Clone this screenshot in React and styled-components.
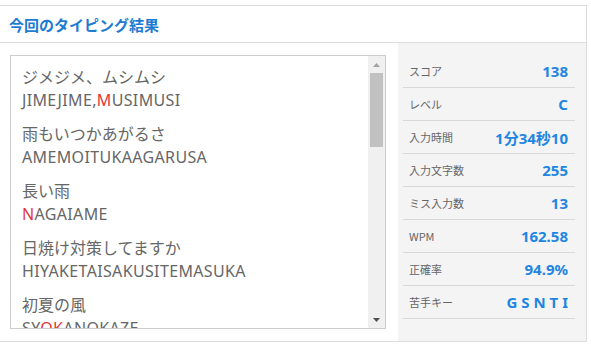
import React from 'react'
import styled, { createGlobalStyle } from 'styled-components'

const GlobalStyle = createGlobalStyle`
  body {
    margin: 0;
    background: #fff;
    font-family: "Noto Sans", "Noto Sans CJK JP", sans-serif;
  }
`

const Frame = styled.div`
  margin-top: 5px;
  width: 587px;
  height: 337px;
  box-sizing: border-box;
  border: 1px solid #dcdcdc;
  border-left: none;
  display: flex;
  flex-direction: column;
`
const Header = styled.div`
  height: 36px;
  flex-shrink: 0;
  border-bottom: 1px solid #dcdcdc;
  display: flex;
  align-items: center;
  padding-left: 9px;
  font-family: "Noto Sans CJK JP", sans-serif;
  font-size: 15px;
  font-weight: 700;
  color: #1d7bd3;
`
const Body = styled.div`
  flex: 1;
  display: flex;
  padding-left: 10px;
`
const Left = styled.div`
  padding-top: 12px;
`
const TextBox = styled.div`
  width: 376px;
  height: 274px;
  box-sizing: border-box;
  border: 1px solid #cccccc;
  display: flex;
`
const Content = styled.div`
  flex: 1;
  overflow: hidden;
  padding: 10px 11px;
  color: #666;
  font-size: 16px;
  line-height: 23px;
`
const Group = styled.div`
  margin-bottom: 11px;
`
const Romaji = styled.div`
  letter-spacing: 0.35px;
`
const Miss = styled.span`
  color: #e5353a;
`
const Scrollbar = styled.div`
  width: 17px;
  flex-shrink: 0;
  background: #f0f0f0;
  display: flex;
  flex-direction: column;
`
const ArrowButton = styled.div`
  height: 17px;
  display: flex;
  align-items: center;
  justify-content: center;
  color: ${p => p.$down ? '#505050' : '#a3a3a3'};
`
const Track = styled.div`
  flex: 1;
  padding: 0 2px;
`
const Thumb = styled.div`
  height: 74px;
  background: #c1c1c1;
`
const Panel = styled.div`
  margin-left: 12px;
  width: 188px;
  background: #f4f4f4;
  box-sizing: border-box;
  padding: 12px 11px 0 5px;
`
const StatRow = styled.div`
  height: 33px;
  box-sizing: border-box;
  border-bottom: 1px solid #d8d8d8;
  display: flex;
  align-items: center;
  justify-content: space-between;
  padding: 0 7px 0 6px;
`
const Label = styled.span`
  font-family: "Noto Sans CJK JP", sans-serif;
  font-size: 11px;
  color: #666;
`
const Value = styled.span`
  font-size: 15px;
  font-weight: 700;
  color: #1e86e2;
  white-space: pre;
`

const Arrow = ({ down }) => (
  <svg width="7" height="4" viewBox="0 0 7 4">
    <path d={down ? 'M0 0H7L3.5 4Z' : 'M0 4H7L3.5 0Z'} fill="currentColor" />
  </svg>
)

const lines = [
  { jp: 'ジメジメ、ムシムシ', romaji: [['JIMEJIME,'], ['M', true], ['USIMUSI']] },
  { jp: '雨もいつかあがるさ', romaji: [['AMEMOITUKAAGARUSA']] },
  { jp: '長い雨', romaji: [['N', true], ['AGAIAME']] },
  { jp: '日焼け対策してますか', romaji: [['HIYAKETAISAKUSITEMASUKA']] },
  { jp: '初夏の風', romaji: [['SY'], ['OK', true], ['ANOKAZE']] },
]

const stats = [
  ['スコア', '138'],
  ['レベル', 'C'],
  ['入力時間', '1分34秒10'],
  ['入力文字数', '255'],
  ['ミス入力数', '13'],
  ['WPM', '162.58'],
  ['正確率', '94.9%'],
  ['苦手キー', 'G S N T I'],
]

const App = () => {
  return (
    <>
      <GlobalStyle />
      <Frame>
        <Header>今回のタイピング結果</Header>
        <Body>
          <Left>
            <TextBox>
              <Content>
                {lines.map((l, i) => (
                  <Group key={i}>
                    <div>{l.jp}</div>
                    <Romaji>
                      {l.romaji.map(([t, miss], j) =>
                        miss ? <Miss key={j}>{t}</Miss> : <span key={j}>{t}</span>
                      )}
                    </Romaji>
                  </Group>
                ))}
              </Content>
              <Scrollbar>
                <ArrowButton><Arrow /></ArrowButton>
                <Track><Thumb /></Track>
                <ArrowButton $down><Arrow down /></ArrowButton>
              </Scrollbar>
            </TextBox>
          </Left>
          <Panel>
            {stats.map(([label, value]) => (
              <StatRow key={label}>
                <Label>{label}</Label>
                <Value>{value}</Value>
              </StatRow>
            ))}
          </Panel>
        </Body>
      </Frame>
    </>
  )
}

export default App
